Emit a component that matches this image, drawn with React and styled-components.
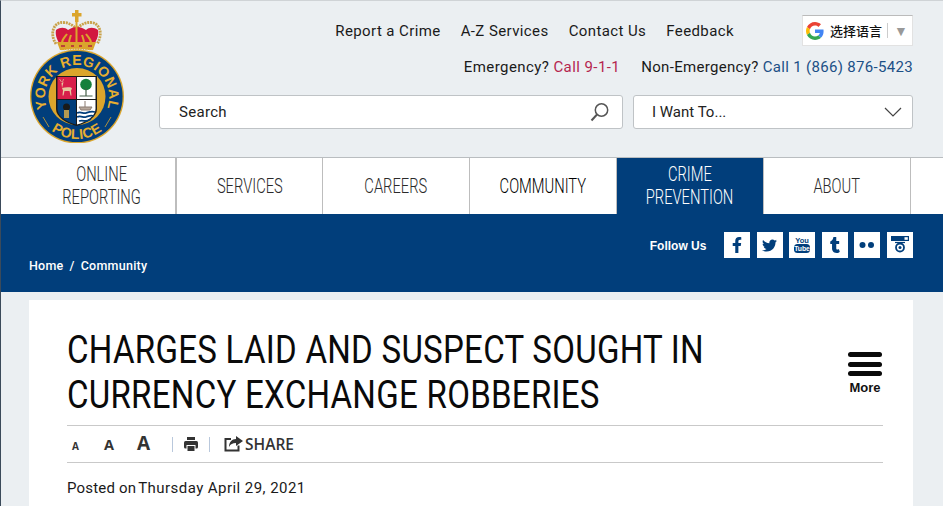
import React from "react";
import styled, { createGlobalStyle } from "styled-components";
import { FaFacebookF, FaTwitter, FaTumblr } from "react-icons/fa";

const GlobalStyle = createGlobalStyle`
  html, body {
    margin: 0;
    padding: 0;
    background: #ebeff2;
  }
  * {
    box-sizing: border-box;
  }
`;

const BLUE = "#013e7b";
const GOLD = "#dba52c";

const Logo = () => (
  <LogoSvg viewBox="0 0 95 133" width="95" height="133">
    <defs>
      <path id="topArc" d="M 21.200 104.500 A 32 32 0 1 1 74.800 104.500" />
      <path id="botArc" d="M 15 113.500 A 43 43 0 0 0 81 113.500" />
    </defs>
    {/* crown */}
    <path d="M46 0h3.500v3h3v3.500h-3V12h-3.500V6.500h-3V3h3z" fill={GOLD} />
    <path d="M27 34C20 23 25 12 34 12.500c6 0 10 3 13.500 6.500 3.500-3.500 7.500-6.500 13.500-6.500 9-.5 14 10.500 7 21.500" fill="none" stroke="#c9a24a" strokeWidth="2.800" strokeDasharray="2 .8" />
    <path d="M27 20c4-3 9-3 12 0 3-2 6-3 9-3s6 1 9 3c3-3 8-3 12 0 1 5-1 9-3 13H30c-2-4-4-8-3-13z" fill="#d2173f" />
    <path d="M47.500 10v24M33 33c0-4 3-6 5-9M62 33c0-4-3-6-5-9M40 33c0-3 1-5 2-8M55 33c0-3-1-5-2-8" stroke={GOLD} strokeWidth="2" fill="none" />
    <path d="M28 32h39l-3 8H31z" fill={GOLD} />
    <path d="M32 36h4M42 36h3M50 36h3M59 36h4" stroke="#b3213a" strokeWidth="1.600" />
    <path d="M30 42c10-3 25-3 35 0" stroke="#dfe3e6" strokeWidth="2" strokeDasharray="1.500 1" fill="none" />
    {/* badge */}
    <circle cx="48" cy="86.500" r="47" fill={GOLD} />
    <circle cx="48" cy="86.500" r="45.600" fill={BLUE} />
    <circle cx="48" cy="86.500" r="28.500" fill={GOLD} />
    <path d="M14 107l6 10M82 107l-6 10" stroke={GOLD} strokeWidth="0.800" />
    <text fill="#e6ae30" fontFamily="Liberation Sans, sans-serif" fontWeight="700" fontSize="14" letterSpacing="0.400">
      <textPath href="#topArc" startOffset="50%" textAnchor="middle">YORK REGIONAL</textPath>
    </text>
    <text fill="#e6ae30" fontFamily="Liberation Sans, sans-serif" fontWeight="700" fontSize="14" letterSpacing="0.400">
      <textPath href="#botArc" startOffset="50%" textAnchor="middle">POLICE</textPath>
    </text>
    {/* shield */}
    <path d="M27 66h41v33c0 8-10 14-20.500 17C37 113 27 107 27 99z" fill="#1a1a1a" />
    <rect x="28.500" y="67" width="18.500" height="22" fill="#d81f4b" />
    <rect x="48" y="67" width="18.500" height="22" fill="#fff" />
    <path d="M28.500 90h18.500v24.500C38 112 28.500 107 28.500 99z" fill={BLUE} />
    <path d="M48 90h18.500v9c0 7-9 13-18.500 15.500z" fill="#fff" />
    {/* deer */}
    <path d="M33 78c3-1 7-1 9-.500l1 1-1 2 .500 5h-1l-1-4.500h-5l-1 4.500h-1l.500-5zM33 78l-.500-5 2-1" fill="#e8c9a0" />
    <path d="M32.500 72l-2-3M33.500 72l1-3" stroke="#e8c9a0" strokeWidth="0.700" />
    {/* tree */}
    <circle cx="57" cy="74.500" r="5.800" fill="#16803c" />
    <path d="M57 78v7.500M50.500 86h13" stroke="#46604a" strokeWidth="1.200" />
    {/* lower quarters */}
    <circle cx="37.500" cy="97" r="3.500" fill="#1a1a1a" />
    <rect x="35" y="100" width="5" height="8" fill="#b59a50" />
    <path d="M50 97h13l-2 3H52zM56 91v6" stroke="#8a7a70" strokeWidth="1" fill="#b7a89c" />
    <path d="M48 103c4-2 6 1 9 0s5-2 9-1M48 107c4-2 6 1 9 0s4-2 8-1M50 111c3-1 5 0 7 0s3-1 5-2" stroke={BLUE} strokeWidth="1.800" fill="none" />
  </LogoSvg>
);

const GoogleG = () => (
  <svg width="18" height="18" viewBox="0 0 48 48">
    <path fill="#EA4335" d="M24 9.500c3.500 0 6.700 1.300 9.100 3.500l6.800-6.800C35.800 2.400 30.300 0 24 0 14.600 0 6.500 5.400 2.600 13.200l7.900 6.200C12.400 13.700 17.700 9.500 24 9.500z" />
    <path fill="#4285F4" d="M46.900 24.500c0-1.600-.2-3.100-.4-4.500H24v9h12.900c-.6 3-2.200 5.500-4.700 7.200l7.700 6c4.400-4.200 7-10.300 7-17.700z" />
    <path fill="#FBBC05" d="M10.500 28.600c-.5-1.400-.8-3-.8-4.600s.3-3.200.8-4.600l-7.900-6.200C.9 16.500 0 20.100 0 24s.9 7.500 2.600 10.800l7.900-6.200z" />
    <path fill="#34A853" d="M24 48c6.500 0 11.900-2.100 15.900-5.800l-7.700-6c-2.100 1.400-4.900 2.300-8.200 2.300-6.300 0-11.600-4.200-13.500-9.900l-7.900 6.200C6.500 42.600 14.600 48 24 48z" />
  </svg>
);

const SearchIcon = () => (
  <svg width="20" height="20" viewBox="0 0 20 20" fill="none" stroke="#555" strokeWidth="1.500">
    <circle cx="11.500" cy="8" r="6.200" />
    <path d="M7 12.500L1.500 18.500" strokeWidth="2" />
  </svg>
);

const ChevronIcon = () => (
  <svg width="18" height="10" viewBox="0 0 18 10" fill="none" stroke="#444" strokeWidth="1.200">
    <path d="M1 1l8 8 8-8" />
  </svg>
);

const YoutubeIcon = () => (
  <svg width="20" height="20" viewBox="0 0 20 20">
    <text x="10" y="7.500" textAnchor="middle" fontFamily="Liberation Sans, sans-serif" fontWeight="700" fontSize="7.500" fill={BLUE}>You</text>
    <rect x="2" y="9" width="16" height="9" rx="3.500" fill={BLUE} />
    <text x="10" y="16.200" textAnchor="middle" fontFamily="Liberation Sans, sans-serif" fontWeight="700" fontSize="6.800" fill="#fff">Tube</text>
  </svg>
);

const FlickrIcon = () => (
  <svg width="16" height="8" viewBox="0 0 16 8" fill={BLUE}>
    <circle cx="3.500" cy="4" r="3" />
    <circle cx="12" cy="4" r="3" />
  </svg>
);

const InstagramIcon = () => (
  <svg width="22" height="22" viewBox="0 0 22 22">
    <path d="M2 2h18v5H2z" fill={BLUE} />
    <rect x="15.500" y="3.200" width="3.300" height="2.600" fill="#fff" />
    <path d="M6 8.500h10" stroke={BLUE} strokeWidth="1.200" />
    <circle cx="11" cy="13.500" r="4" fill="none" stroke={BLUE} strokeWidth="1.800" />
    <circle cx="11" cy="13.500" r="1.500" fill={BLUE} />
  </svg>
);

const PrintIcon = () => (
  <svg width="14" height="14" viewBox="0 0 14 14" fill="#333">
    <rect x="3" y="0" width="8" height="3" />
    <rect x="0" y="4" width="14" height="7.500" rx="1.500" />
    <rect x="2.500" y="8" width="9" height="6" fill="#fff" />
    <rect x="3.500" y="9" width="7" height="5" />
  </svg>
);

const ShareIcon = () => (
  <svg width="19" height="16" viewBox="0 0 19 16">
    <path d="M7 3H1.500v11.500h13V9.500" fill="none" stroke="#333" strokeWidth="2" />
    <path d="M12 0l7 5-7 5V7c-3.500 0-5.500 1-7 4 0-5 3-8 7-8z" fill="#333" />
  </svg>
);

const navItems = [
  { label: ["ONLINE", "REPORTING"], first: true },
  { label: ["SERVICES"] },
  { label: ["CAREERS"] },
  { label: ["COMMUNITY"], dark: true },
  { label: ["CRIME", "PREVENTION"], active: true },
  { label: ["ABOUT"] },
];

const App = () => {
  return (
    <Page>
      <GlobalStyle />
      <Header>
        <LogoWrap>
          <Logo />
        </LogoWrap>
        <HeaderRight>
          <TopRow>
            <TopLink>Report a Crime</TopLink>
            <TopLink>A-Z Services</TopLink>
            <TopLink>Contact Us</TopLink>
            <TopLink>Feedback</TopLink>
            <Translate>
              <GoogleG />
              <TranslateText>选择语言</TranslateText>
              <TranslateCaret>▼</TranslateCaret>
            </Translate>
          </TopRow>
          <PhoneRow>
            <EmergencyGroup>
              Emergency? <Emergency>Call 9-1-1</Emergency>
            </EmergencyGroup>
            <span>
              Non-Emergency? <NonEmergency>Call 1 (866) 876-5423</NonEmergency>
            </span>
          </PhoneRow>
          <SearchRow>
            <SearchBox>
              <span>Search</span>
              <SearchIcon />
            </SearchBox>
            <WantBox>
              <span>I Want To...</span>
              <ChevronIcon />
            </WantBox>
          </SearchRow>
        </HeaderRight>
      </Header>

      <Nav>
        {navItems.map((item) => (
          <NavItem key={item.label[0]} $first={item.first} $active={item.active} $dark={item.dark}>
            {item.label.map((line) => (
              <NavLine key={line}>{line}</NavLine>
            ))}
          </NavItem>
        ))}
      </Nav>

      <Band>
        <Follow>
          <FollowLabel>Follow Us</FollowLabel>
          <Social><FaFacebookF size={16} /></Social>
          <Social><FaTwitter size={15} /></Social>
          <Social><YoutubeIcon /></Social>
          <Social><FaTumblr size={16} /></Social>
          <Social><FlickrIcon /></Social>
          <Social><InstagramIcon /></Social>
        </Follow>
        <Crumbs>
          <span>Home</span>
          <span>/</span>
          <span>Community</span>
        </Crumbs>
      </Band>

      <Card>
        <TitleRow>
          <Title>
            <TitleLine>CHARGES LAID AND SUSPECT SOUGHT IN</TitleLine>
            <TitleLine>CURRENCY EXCHANGE ROBBERIES</TitleLine>
          </Title>
          <More>
            <Bar />
            <Bar />
            <Bar />
            <MoreLabel>More</MoreLabel>
          </More>
        </TitleRow>
        <Tools>
          <SizeGroup>
            <SizeA $size={10} $width={32}>A</SizeA>
            <SizeA $size={14.5} $width={33}>A</SizeA>
            <SizeA $size={19} $width={40}>A</SizeA>
          </SizeGroup>
          <ToolSep />
          <PrintWrap><PrintIcon /></PrintWrap>
          <ToolSep />
          <ShareWrap>
            <ShareIcon />
            <span>SHARE</span>
          </ShareWrap>
        </Tools>
        <Posted>
          Posted on<PostedDate>Thursday April 29, 2021</PostedDate>
        </Posted>
      </Card>
    </Page>
  );
};

export default App;

const Page = styled.div`
  width: 943px;
  height: 506px;
  overflow: hidden;
  background: #ebeff2;
  border-top: 1px solid #cfd3d6;
  border-left: 1px solid #3b4a5a;
  font-family: "Roboto", "Liberation Sans", sans-serif;
`;

const Header = styled.header`
  height: 156px;
  display: flex;
  padding-left: 28px;
`;

const LogoWrap = styled.div`
  width: 130px;
  padding-top: 9px;
`;

const LogoSvg = styled.svg`
  display: block;
`;

const HeaderRight = styled.div`
  width: 754px;
  display: flex;
  flex-direction: column;
`;

const TopRow = styled.div`
  display: flex;
  justify-content: flex-end;
  align-items: center;
  margin-top: 14px;
  height: 31px;
`;

const TopLink = styled.a`
  font-size: 15px;
  color: #1a1a1a;
  margin-right: 20px;
  letter-spacing: 0.4px;
`;

const Translate = styled.div`
  width: 111px;
  height: 31px;
  margin-left: 48px;
  background: #fff;
  border: 1px solid #e2e2e2;
  border-top-color: #bbb;
  display: flex;
  align-items: center;
  padding-left: 3px;
`;

const TranslateText = styled.span`
  font-family: "Noto Sans CJK SC", sans-serif;
  font-size: 13px;
  font-weight: 500;
  color: #111;
  margin-left: 6px;
  padding-right: 5px;
  border-right: 1px solid #ccc;
  line-height: 15px;
`;

const TranslateCaret = styled.span`
  color: #999;
  font-size: 14px;
  margin-left: 6px;
`;

const PhoneRow = styled.div`
  display: flex;
  justify-content: flex-end;
  gap: 21px;
  margin-top: 11px;
  font-size: 15px;
  line-height: 20px;
  color: #1a1a1a;
  letter-spacing: 0.32px;
`;

const EmergencyGroup = styled.span`
  letter-spacing: 0.42px;
`;

const Emergency = styled.span`
  color: #b5264f;
`;

const NonEmergency = styled.span`
  color: #1c4f86;
`;

const SearchRow = styled.div`
  display: flex;
  gap: 10px;
  margin-top: 18px;
`;

const SearchBox = styled.div`
  width: 464px;
  height: 34px;
  background: #fff;
  border: 1px solid #bfc3c6;
  border-radius: 3px;
  display: flex;
  align-items: center;
  justify-content: space-between;
  padding: 0 12px 0 19px;
  font-size: 15px;
  letter-spacing: 0.3px;
  color: #222;
`;

const WantBox = styled.div`
  width: 280px;
  height: 34px;
  background: #fff;
  border: 1px solid #bfc3c6;
  border-radius: 3px;
  display: flex;
  align-items: center;
  justify-content: space-between;
  padding: 0 10px 0 18px;
  font-size: 15px;
  color: #222;
`;

const Nav = styled.nav`
  height: 57px;
  display: flex;
  background: #fff;
  border-top: 1px solid #b9bdc0;
  padding-left: 28px;
`;

const NavItem = styled.div`
  width: ${(p) => (p.$first ? "148px" : "147px")};
  display: flex;
  flex-direction: column;
  align-items: center;
  justify-content: center;
  font-size: 20px;
  font-weight: 300;
  line-height: 23px;
  border-right: ${(p) => (p.$first ? "2px" : "1px")} solid #bdbdbd;
  color: ${(p) => (p.$active ? "#fff" : p.$dark ? "#000" : "#2a2a2a")};
  background: ${(p) => (p.$active ? BLUE : "transparent")};

  &:nth-child(2) {
    width: 146px;
  }
`;

/* no condensed face is installed, so the lines are squeezed */
const NavLine = styled.div`
  white-space: nowrap;
  transform: scaleX(0.735);
`;

const Band = styled.div`
  height: 78px;
  background: ${BLUE};
  color: #fff;
  padding: 18px 30px 0 28px;
  display: flex;
  flex-direction: column;
`;

const Follow = styled.div`
  display: flex;
  justify-content: flex-end;
  align-items: center;
  gap: 6.600px;
`;

const FollowLabel = styled.span`
  font-family: "Liberation Sans", sans-serif;
  font-size: 12px;
  font-weight: 700;
  margin: 2px 11px 0 0;
`;

const Social = styled.div`
  width: 26px;
  height: 26px;
  background: #fff;
  color: ${BLUE};
  display: flex;
  align-items: center;
  justify-content: center;
`;

const Crumbs = styled.div`
  display: flex;
  gap: 6px;
  font-size: 12.500px;
  font-weight: 500;
  letter-spacing: 0.25px;
  line-height: 16px;
`;

const Card = styled.main`
  width: 884px;
  height: 300px;
  margin: 8px 0 0 28px;
  padding: 27px 30px 0 38px;
  background: #fff;
`;

const TitleRow = styled.div`
  display: flex;
  justify-content: space-between;
  height: 99px;
  border-bottom: 1px solid #c9c9c9;
`;

const Title = styled.h1`
  width: 680px;
  margin: 0;
  padding-top: 1px;
  font-size: 38px;
  font-weight: 400;
  line-height: 45px;
  letter-spacing: 0.3px;
  color: #0a0a0a;
`;

const TitleLine = styled.div`
  white-space: nowrap;
  transform: scaleX(0.87);
  transform-origin: left center;
`;

const More = styled.div`
  display: flex;
  flex-direction: column;
  align-items: center;
  width: 36px;
  gap: 4.500px;
  padding-top: 25px;
`;

const Bar = styled.div`
  width: 34px;
  height: 5px;
  border-radius: 3px;
  background: #0a0a0a;
`;

const MoreLabel = styled.div`
  font-family: "Liberation Sans", sans-serif;
  font-size: 13px;
  font-weight: 700;
  color: #111;
  line-height: 15px;
  margin-top: -1px;
`;

const Tools = styled.div`
  height: 37px;
  display: flex;
  align-items: center;
  border-bottom: 1px solid #c9c9c9;
  color: #333;
`;

const SizeGroup = styled.div`
  display: flex;
  align-items: baseline;
  line-height: 26px;
  margin-top: 1px;
`;

const SizeA = styled.span`
  width: ${(p) => p.$width}px;
  padding-left: 5px;
  font-family: "Open Sans", sans-serif;
  font-weight: 700;
  font-size: ${(p) => p.$size}px;
`;

const ToolSep = styled.span`
  width: 1px;
  height: 15px;
  background: #b9c8dc;
`;

const PrintWrap = styled.span`
  display: flex;
  margin: 0 11px 0 11px;
`;

const ShareWrap = styled.span`
  display: flex;
  align-items: center;
  gap: 2px;
  margin-left: 14px;
  font-family: "Open Sans", sans-serif;
  font-weight: 600;
  font-size: 15.500px;
`;

const Posted = styled.p`
  margin: 16px 0 0;
  font-size: 15px;
  line-height: 18px;
  color: #1a1a1a;
  letter-spacing: 0.18px;
`;

const PostedDate = styled.span`
  margin-left: 2px;
  letter-spacing: 0.45px;
`;
